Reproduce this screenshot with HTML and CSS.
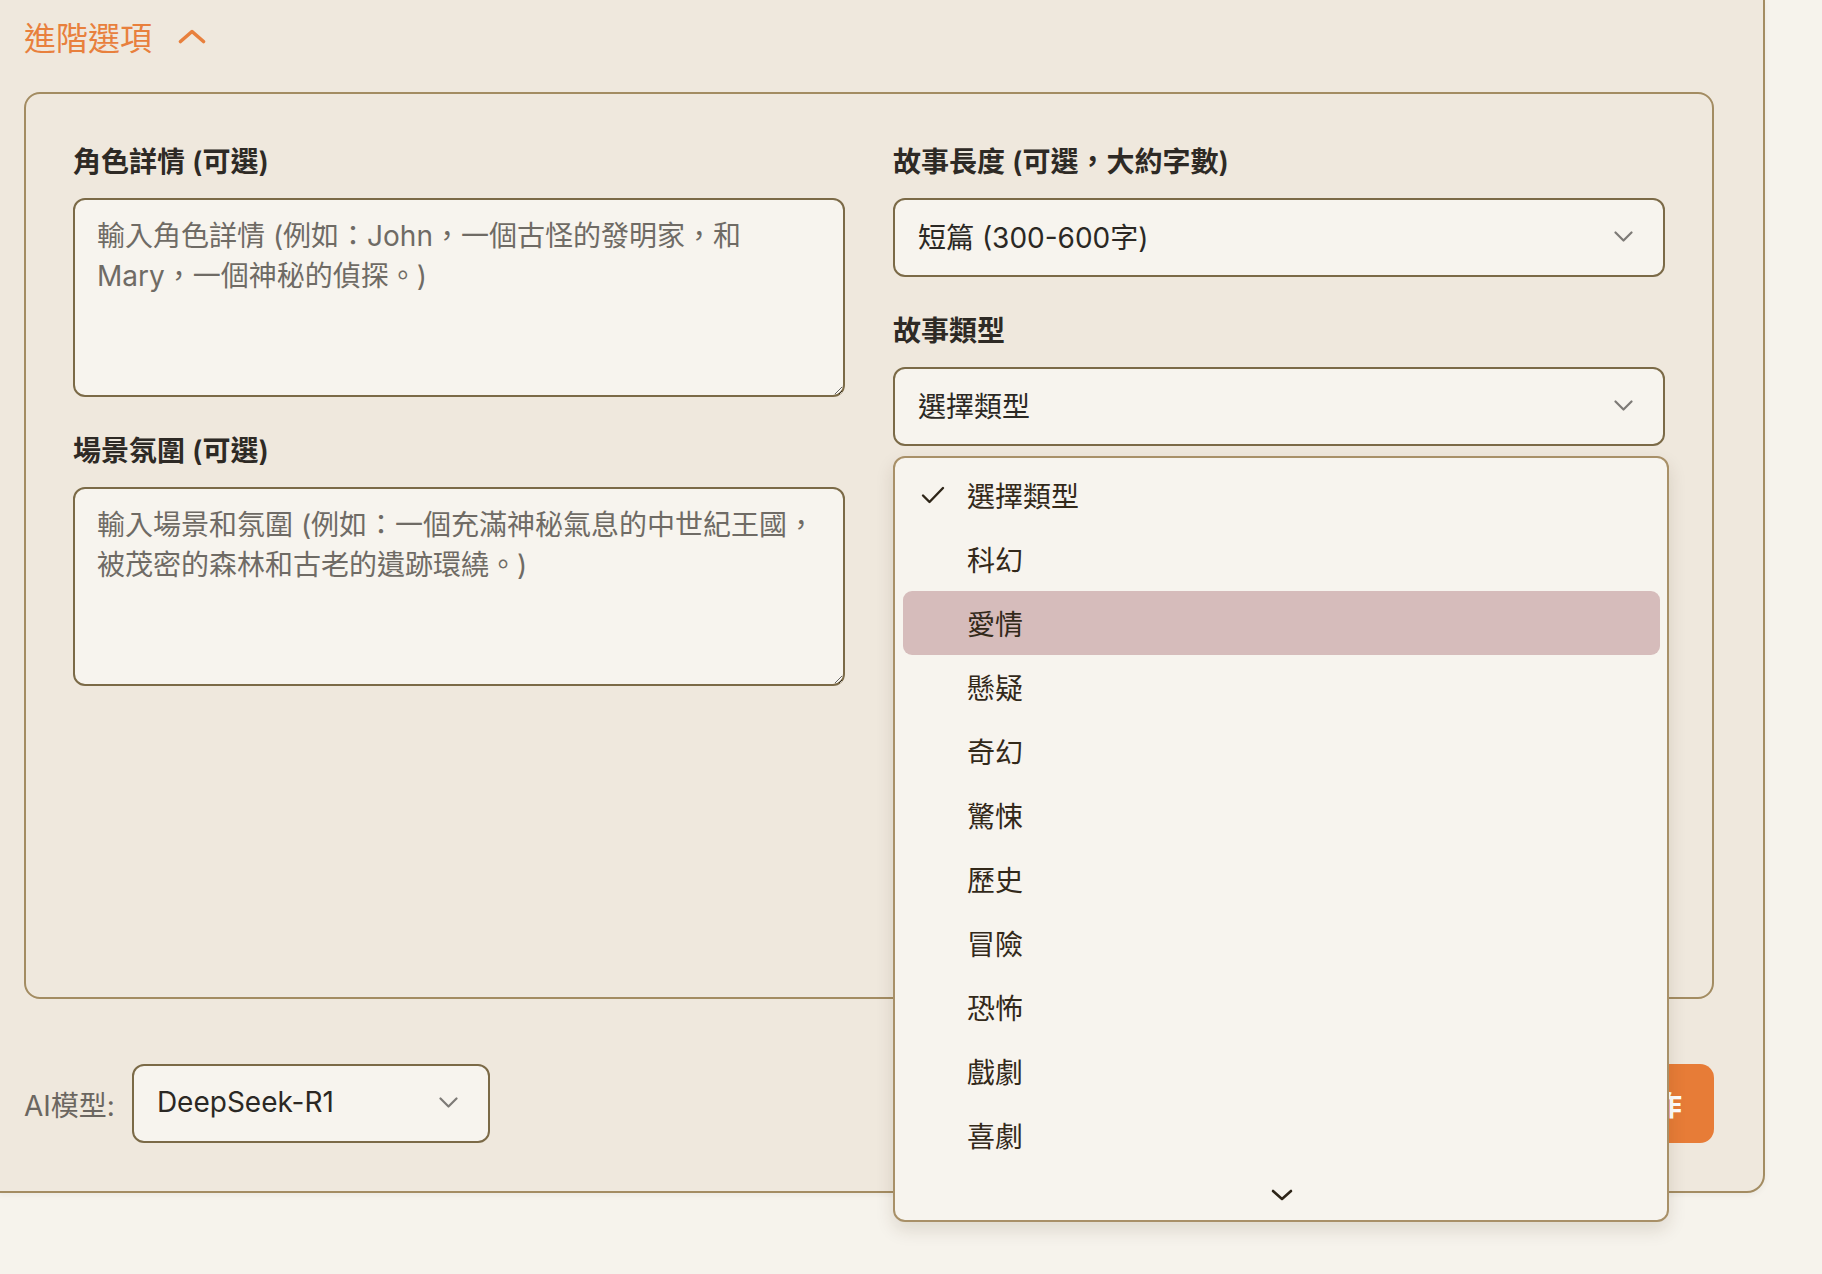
FILE: index.html
```html
<!DOCTYPE html>
<html lang="zh-Hant">
<head>
  <meta charset="UTF-8">
  <title>進階選項</title>
  <link rel="stylesheet" href="styles.css">
</head>
<body>
  <div class="panel">
    <div class="toggle">
      <span>進階選項</span>
      <svg class="caret" width="28" height="15" viewBox="0 0 28 15"><path d="M2.5 12.5 L14 2.5 L25.5 12.5" /></svg>
    </div>

    <div class="advanced">
      <div class="col">
        <div class="field">
          <label for="characters">角色詳情 (可選)</label>
          <textarea id="characters" placeholder="輸入角色詳情 (例如：John，一個古怪的發明家，和 Mary，一個神秘的偵探。)"></textarea>
        </div>
        <div class="field">
          <label for="setting">場景氛圍 (可選)</label>
          <textarea id="setting" placeholder="輸入場景和氛圍 (例如：一個充滿神秘氣息的中世紀王國，被茂密的森林和古老的遺跡環繞。)"></textarea>
        </div>
      </div>

      <div class="col">
        <div class="field">
          <label>故事長度 (可選，大約字數)</label>
          <div class="select">
            <span>短篇 (300-600字)</span>
            <svg class="chev" width="19" height="11" viewBox="0 0 19 11"><path d="M1.5 1.5 L9.5 9.5 L17.5 1.5" /></svg>
          </div>
        </div>
        <div class="field dropdown">
          <label>故事類型</label>
          <div class="select">
            <span>選擇類型</span>
            <svg class="chev" width="19" height="11" viewBox="0 0 19 11"><path d="M1.5 1.5 L9.5 9.5 L17.5 1.5" /></svg>
          </div>

          <ul class="menu">
            <li class="selected">
              <svg class="check" width="24" height="18" viewBox="0 0 24 18"><path d="M2 9.5 L8.5 16 L22 2" /></svg>
              <span>選擇類型</span>
            </li>
            <li><span>科幻</span></li>
            <li class="hover"><span>愛情</span></li>
            <li><span>懸疑</span></li>
            <li><span>奇幻</span></li>
            <li><span>驚悚</span></li>
            <li><span>歷史</span></li>
            <li><span>冒險</span></li>
            <li><span>恐怖</span></li>
            <li><span>戲劇</span></li>
            <li><span>喜劇</span></li>
            <li class="more">
              <svg width="22" height="12" viewBox="0 0 22 12"><path d="M2 2 L11 10 L20 2" /></svg>
            </li>
          </ul>
        </div>
      </div>
    </div>

    <div class="footer">
      <div class="model">
        <span class="model-label">AI模型:</span>
        <div class="select small">
          <span>DeepSeek-R1</span>
          <svg class="chev" width="19" height="11" viewBox="0 0 19 11"><path d="M1.5 1.5 L9.5 9.5 L17.5 1.5" /></svg>
        </div>
      </div>
      <button class="start">開始創作</button>
    </div>
  </div>
</body>
</html>
```

FILE: styles.css
```css
html, body {
  min-height: 100vh;
}
body {
  margin: 0;
  background-color: #f6f3ec;
  font-family: Inter, "Noto Sans CJK TC", sans-serif;
  color: #2b2824;
}
.panel {
  box-sizing: border-box;
  width: 1767px;
  margin: -2px 0 0 -2px;
  padding: 12px 49px 48px 24px;
  background: #efe8dd;
  border: 2px solid #a38c62;
  border-radius: 0 0 18px 0;
  box-shadow: 0 2px 6px rgba(0,0,0,0.05);
}
.toggle {
  display: flex;
  align-items: center;
  gap: 26px;
  height: 48px;
  font-size: 32px;
  color: #e8803d;
}
.caret path {
  fill: none;
  stroke: #e8803d;
  stroke-width: 3.6;
  stroke-linecap: round;
  stroke-linejoin: round;
}
.advanced {
  box-sizing: border-box;
  height: 907px;
  margin-top: 32px;
  padding: 47px;
  border: 2px solid #a38c62;
  border-radius: 16px;
  display: grid;
  grid-template-columns: 1fr 1fr;
  column-gap: 48px;
  align-items: start;
}
.col {
  display: flex;
  flex-direction: column;
  gap: 33px;
}
.field {
  display: flex;
  flex-direction: column;
}
.field label {
  font-size: 28px;
  line-height: 42px;
  font-weight: 600;
  margin-bottom: 15px;
  color: #2e2a25;
}
textarea {
  box-sizing: border-box;
  width: 100%;
  height: 199px;
  padding: 16px 22px;
  border: 2px solid #7b6a47;
  border-radius: 12px;
  background: #f7f4ee;
  font-family: Inter, "Noto Sans CJK TC", sans-serif;
  font-size: 28px;
  line-height: 40px;
  color: #2b2824;
}
textarea::placeholder {
  color: #6f6b65;
}
.select {
  box-sizing: border-box;
  height: 79px;
  padding: 0 30px 3px 23px;
  border: 2px solid #7b6a47;
  border-radius: 12px;
  background: #f7f4ee;
  display: flex;
  align-items: center;
  justify-content: space-between;
  font-size: 28px;
  color: #2b2824;
}
.chev path {
  fill: none;
  stroke: #7d7a76;
  stroke-width: 2.2;
  stroke-linecap: round;
  stroke-linejoin: round;
}
.dropdown {
  position: relative;
}
.menu {
  position: absolute;
  top: calc(100% + 10px);
  left: 0;
  width: calc(100% + 4px);
  box-sizing: border-box;
  margin: 0;
  padding: 5px 7px 2px 8px;
  list-style: none;
  background: #f7f4ee;
  border: 2px solid #a89068;
  border-radius: 12px;
  box-shadow: 0 8px 18px rgba(60,40,10,0.13);
  z-index: 10;
}
.menu li {
  height: 64px;
  padding-left: 64px;
  border-radius: 9px;
  display: flex;
  align-items: center;
  font-size: 28px;
  color: #33291a;
}
.menu li.selected {
  padding-left: 18px;
  gap: 22px;
}
.menu li.hover {
  background: #d6bcbb;
}
.check path {
  fill: none;
  stroke: #2e2518;
  stroke-width: 2.4;
  stroke-linecap: round;
  stroke-linejoin: round;
}
.menu li.more {
  box-sizing: border-box;
  height: 51px;
  padding: 5px 0 0;
  justify-content: center;
}
.more path {
  fill: none;
  stroke: #2e2518;
  stroke-width: 2.6;
  stroke-linecap: round;
  stroke-linejoin: round;
}
.footer {
  margin-top: 65px;
  display: flex;
  align-items: center;
  justify-content: space-between;
}
.model {
  display: flex;
  align-items: center;
  gap: 17px;
}
.model-label {
  font-size: 28px;
  color: #6b6660;
}
.select.small {
  width: 358px;
}
.start {
  height: 79px;
  padding: 0 32px;
  border: none;
  border-radius: 14px;
  background: #e77c37;
  color: #fff;
  font-family: Inter, "Noto Sans CJK TC", sans-serif;
  font-size: 28px;
  font-weight: 600;
}
```
